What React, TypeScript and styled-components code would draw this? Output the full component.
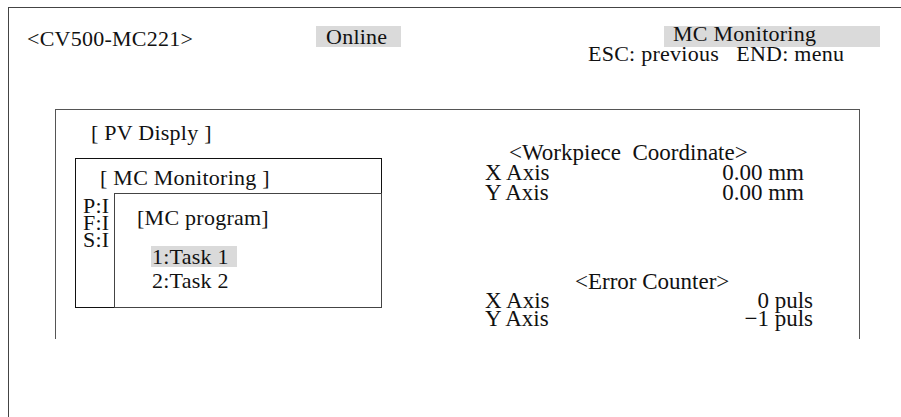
import styled, { createGlobalStyle } from "styled-components"

const GlobalStyle = createGlobalStyle`
    html, body {
        margin: 0;
        padding: 0;
        background: #fff;
        overflow: hidden;
    }
    body {
        font-family: "Liberation Serif", "Times New Roman", serif;
        color: #111;
    }
`

const Screen = styled.main`
    margin: 7px 0 0 8px;
    height: 410px;
    box-sizing: border-box;
    border-top: 1px solid #444;
    border-left: 1px solid #444;
    font-size: 22px;
    letter-spacing: 0.25px;
    white-space: pre;
`

const Header = styled.header`
    height: 101px;
    box-sizing: border-box;
    padding: 18px 0 0 18px;
    display: flex;
    align-items: flex-start;
`

const Model = styled.div`
    width: 289px;
    flex-shrink: 0;
    padding-top: 2px;
    line-height: 21px;
`

const Tag = styled.div<{ $width: number; $pad: number }>`
    width: ${p => p.$width}px;
    flex-shrink: 0;
    box-sizing: border-box;
    padding-left: ${p => p.$pad}px;
    line-height: 21px;
    background: #dadada;
`

const ModeStack = styled.div`
    margin-left: 187px;
    display: flex;
    flex-direction: column;
    align-items: flex-start;
`

const ModeTag = styled(Tag)`
    margin-left: 76px;
    line-height: 15px;
    padding-bottom: 6px;
`

const KeyHint = styled.div`
    line-height: 13px;
`

const Panel = styled.section`
    margin-left: 46px;
    width: 805px;
    height: 230px;
    box-sizing: border-box;
    border: 1px solid #555;
    border-bottom: none;
    display: flex;
`

const LeftCol = styled.div`
    width: 429px;
    flex-shrink: 0;
    padding-top: 12px;
`

const PanelTitle = styled.div`
    padding-left: 35px;
    line-height: 21px;
`

const MonitorBox = styled.div`
    position: relative;
    margin: 15px 0 0 19px;
    width: 307px;
    height: 150px;
    box-sizing: border-box;
    border: 1px solid #111;
    padding: 8px 0 0 7px;
`

const BoxTitle = styled.div<{ $indent: number }>`
    padding-left: ${p => p.$indent}px;
    line-height: 21px;
`

const StatusList = styled.div`
    margin-top: 9px;
`

const StatusLine = styled.div`
    line-height: 17px;
`

const ProgramBox = styled.div`
    position: absolute;
    top: 34px;
    left: 38px;
    right: -1px;
    bottom: -1px;
    box-sizing: border-box;
    background: #fff;
    border: 1px solid #444;
    padding: 13px 0 0 22px;
`

const TaskList = styled.div`
    margin-top: 18px;
    display: flex;
    flex-direction: column;
    gap: 3px;
`

const TaskItem = styled.div<{ $selected?: boolean }>`
    margin-left: 14px;
    width: 86px;
    box-sizing: border-box;
    padding-left: 1px;
    line-height: 21px;
    background: ${p => (p.$selected ? "#dadada" : "transparent")};
`

const RightCol = styled.div`
    flex: 1;
    padding-top: 32px;
    font-size: 23px;
    letter-spacing: 0;
`

const SectionTitle = styled.div<{ $indent: number; $gap?: number }>`
    margin-top: ${p => p.$gap ?? 0}px;
    padding-left: ${p => p.$indent}px;
    line-height: 21px;
`

const DataRow = styled.div<{ $width: number; $lh: number }>`
    width: ${p => p.$width}px;
    display: flex;
    justify-content: space-between;
    line-height: ${p => p.$lh}px;
`

const coords = [
    { axis: "X Axis", value: "0.00 mm" },
    { axis: "Y Axis", value: "0.00 mm" },
]

const errors = [
    { axis: "X Axis", value: "0 puls" },
    { axis: "Y Axis", value: "\u22121 puls" },
]

export default function App() {
    return <>
        <GlobalStyle />
        <Screen>
            <Header>
                <Model>{"<CV500-MC221>"}</Model>
                <Tag $width={85} $pad={10}>Online</Tag>
                <ModeStack>
                    <ModeTag $width={216} $pad={9}>MC Monitoring</ModeTag>
                    <KeyHint>{"ESC: previous   END: menu"}</KeyHint>
                </ModeStack>
            </Header>
            <Panel>
                <LeftCol>
                    <PanelTitle>[ PV Disply ]</PanelTitle>
                    <MonitorBox>
                        <BoxTitle $indent={17}>[ MC Monitoring ]</BoxTitle>
                        <StatusList>
                            <StatusLine>P:I</StatusLine>
                            <StatusLine>F:I</StatusLine>
                            <StatusLine>S:I</StatusLine>
                        </StatusList>
                        <ProgramBox>
                            <BoxTitle $indent={0}>[MC program]</BoxTitle>
                            <TaskList>
                                <TaskItem $selected>1:Task 1</TaskItem>
                                <TaskItem>2:Task 2</TaskItem>
                            </TaskList>
                        </ProgramBox>
                    </MonitorBox>
                </LeftCol>
                <RightCol>
                    <SectionTitle $indent={24}>{"<Workpiece  Coordinate>"}</SectionTitle>
                    {coords.map(r => <DataRow key={r.axis} $width={319} $lh={20}>
                        <span>{r.axis}</span><span>{r.value}</span>
                    </DataRow>)}
                    <SectionTitle $indent={90} $gap={68}>{"<Error Counter>"}</SectionTitle>
                    {errors.map(r => <DataRow key={r.axis} $width={328} $lh={18}>
                        <span>{r.axis}</span><span>{r.value}</span>
                    </DataRow>)}
                </RightCol>
            </Panel>
        </Screen>
    </>
}
